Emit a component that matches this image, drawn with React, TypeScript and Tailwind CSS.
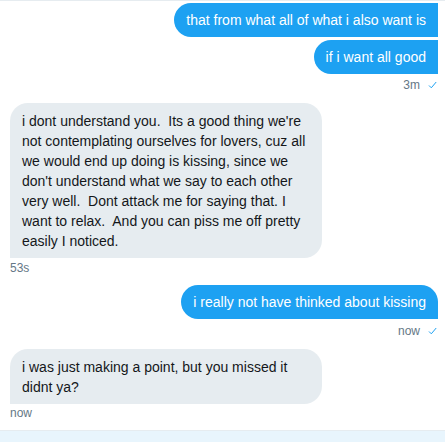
import React from "react";

const Check = () => (
  <svg width="9" height="8" viewBox="0 0 9 8" className="ml-[8px]" fill="none">
    <path d="M1 4.5 L3.3 6.8 L8.2 1" stroke="#1da1f2" strokeWidth="1" />
  </svg>
);

const Sent = ({ children, className = "" }: { children: React.ReactNode; className?: string }) => (
  <div className="flex justify-end">
    <div
      className={
        "max-w-[312px] bg-[#1da1f2] text-white px-[12px] pt-[7px] pb-[7px] text-[14px] leading-[20px] whitespace-pre-wrap rounded-l-[18px] " +
        className
      }
    >
      {children}
    </div>
  </div>
);

const Received = ({ children }: { children: React.ReactNode }) => (
  <div className="flex justify-start">
    <div className="max-w-[312px] bg-[#e6ecf0] text-[#14171a] pl-[12px] pr-[14px] pt-[8px] pb-[7px] text-[14px] leading-[20px] whitespace-pre-wrap rounded-t-[18px] rounded-br-[18px]">
      {children}
    </div>
  </div>
);

export default function App() {
  return (
    <div
      className="w-[445px] h-[442px] bg-white overflow-hidden flex flex-col"
      style={{ fontFamily: '"Liberation Sans", Arial, sans-serif' }}
    >
      <div className="border-t border-[#e6ecf0] pt-[2px] pl-[10px] pr-[7px] flex flex-col">
        <Sent>that from what all of what i also want is</Sent>
        <div className="mt-[3px]">
          <Sent>if i want all good</Sent>
        </div>
        <div className="mt-[3px] flex justify-end items-center pr-[1px] text-[12px] leading-[16px] text-[#657786]">
          <span>3m</span>
          <Check />
        </div>
        <div className="mt-[10px]">
          <Received>
            {"i dont understand you.  Its a good thing we're not contemplating ourselves for lovers, cuz all we would end up doing is kissing, since we don't understand what we say to each other very well.  Dont attack me for saying that. I want to relax.  And you can piss me off pretty easily I noticed."}
          </Received>
        </div>
        <div className="mt-[2px] text-[12px] leading-[16px] text-[#657786]">53s</div>
        <div className="mt-[9px]">
          <Sent className="rounded-tr-[18px]">i really not have thinked about kissing</Sent>
        </div>
        <div className="mt-[4px] flex justify-end items-center pr-[1px] text-[12px] leading-[16px] text-[#657786]">
          <span>now</span>
          <Check />
        </div>
        <div className="mt-[10px]">
          <Received>i was just making a point, but you missed it didnt ya?</Received>
        </div>
        <div className="mt-[1px] text-[12px] leading-[16px] text-[#657786]">now</div>
      </div>
      <div className="mt-auto h-[12px] border-t border-[#e6ecf0] bg-[#e8f5fd]" />
    </div>
  );
}
